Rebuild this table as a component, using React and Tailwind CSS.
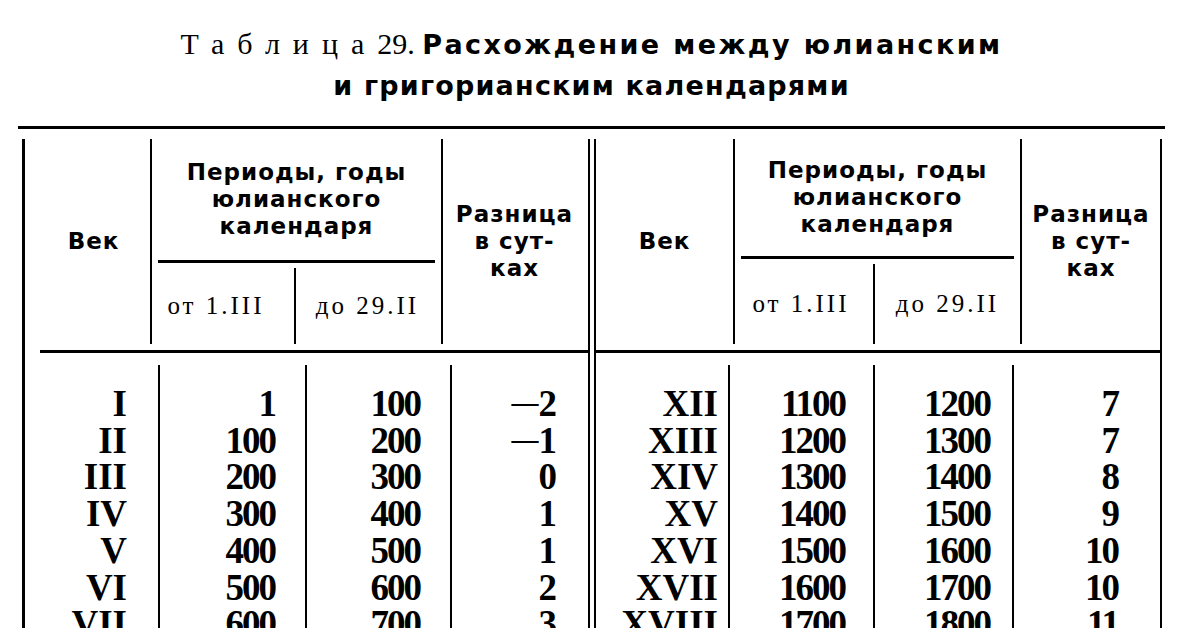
import React from 'react';

const serif = { fontFamily: '"Liberation Serif", "DejaVu Serif", serif' };
const sans = { fontFamily: '"DejaVu Sans", "Liberation Sans", sans-serif' };

const leftRows = [
  ['I', '1', '100', '—2'],
  ['II', '100', '200', '—1'],
  ['III', '200', '300', '0'],
  ['IV', '300', '400', '1'],
  ['V', '400', '500', '1'],
  ['VI', '500', '600', '2'],
  ['VII', '600', '700', '3'],
];

const rightRows = [
  ['XII', '1100', '1200', '7'],
  ['XIII', '1200', '1300', '7'],
  ['XIV', '1300', '1400', '8'],
  ['XV', '1400', '1500', '9'],
  ['XVI', '1500', '1600', '10'],
  ['XVII', '1600', '1700', '10'],
  ['XVIII', '1700', '1800', '11'],
];

const Diff = ({ value }) => {
  if (value.startsWith('—')) {
    return (
      <span>
        <span className="relative -top-[5px] text-[27px] leading-none tracking-normal">—</span>
        {value.slice(1)}
      </span>
    );
  }
  return <span>{value}</span>;
};

// one half of the table: header, rule and body
const Half = ({ rows, head, body, topH, ruleMl, right }) => (
  <div className={`flex flex-col ${right ? 'border-r-2 border-black' : ''}`}>
    {/* header */}
    <div className="flex h-[205px] shrink-0">
      <div
        className={`flex items-center justify-center border-r-2 border-black font-bold text-[23px] tracking-[1px] ${head.vekPad}`}
        style={{ ...sans, width: head.w[0] }}
      >
        Век
      </div>
      <div className="flex flex-col border-r-2 border-black" style={{ width: head.w[1] }}>
        <div
          className="flex flex-col items-center justify-center font-bold text-[23px] leading-[27px] tracking-[1px]"
          style={{ ...sans, height: topH }}
        >
          <div>Периоды, годы</div>
          <div>юлианского</div>
          <div>календаря</div>
        </div>
        <div className="h-[3px] bg-black mx-[6px]" />
        <div className="flex flex-1 pt-[5px]">
          <div
            className={`flex items-center justify-center border-r-2 border-black text-[25px] tracking-[3px] ${head.subPad}`}
            style={{ ...serif, width: head.sub[0] }}
          >
            от 1.III
          </div>
          <div
            className="flex items-center justify-center text-[25px] tracking-[3px]"
            style={{ ...serif, width: head.sub[1] }}
          >
            до 29.II
          </div>
        </div>
      </div>
      <div
        className="flex flex-col items-center justify-center font-bold text-[23px] leading-[27px] tracking-[1px]"
        style={{ ...sans, width: head.w[2] }}
      >
        <div>Разница</div>
        <div>в сут-</div>
        <div>ках</div>
      </div>
    </div>

    {/* header rule */}
    <div className="h-[3px] shrink-0 bg-black mt-[6px]" style={{ marginLeft: ruleMl }} />

    {/* body */}
    <div className="flex flex-1 mt-[12px]">
      {body.map((col, ci) => (
        <div
          key={ci}
          className={`flex flex-col items-end pt-[21px] font-bold text-[37px] leading-[36.7px] ${
            ci === 0 ? 'tracking-normal' : 'tracking-[-2px]'
          } ${ci < 3 ? 'border-r-2 border-black' : ''}`}
          style={{ ...serif, width: col.w, paddingRight: col.pr }}
        >
          {rows.map((r, ri) => (
            <div key={ri} className="whitespace-nowrap">
              {ci === 3 ? <Diff value={r[3]} /> : r[ci]}
            </div>
          ))}
        </div>
      ))}
    </div>
  </div>
);

export default function App() {
  return (
    <div className="w-[1200px] h-[628px] bg-white text-black overflow-hidden flex flex-col">
      {/* title */}
      <div className="h-[126px] shrink-0 pt-[25px] ml-[18px] w-[1147px] text-center">
        <div className="leading-[37px] whitespace-nowrap">
          <span className="text-[30px] tracking-[13px]" style={serif}>
            Таблица
          </span>
          <span className="text-[30px]" style={serif}>
            29.{' '}
          </span>
          <span className="text-[27px] font-bold tracking-[2.4px]" style={sans}>
            Расхождение между юлианским
          </span>
        </div>
        <div className="leading-[37px] text-[27px] font-bold tracking-[1.2px]" style={sans}>
          и григорианским календарями
        </div>
      </div>

      {/* top rule */}
      <div className="h-[3px] shrink-0 bg-black ml-[18px] w-[1147px]" />

      {/* table */}
      <div className="flex flex-1 min-h-0 mt-[10px] ml-[22px] border-l-[3px] border-black">
        <Half
          rows={leftRows}
          topH={121}
          ruleMl={15}
          head={{ w: [127, 291, 143], sub: [144, 143], vekPad: 'pl-[12px]', subPad: 'pr-[14px]' }}
          body={[
            { w: 135, pr: 31 },
            { w: 147, pr: 30 },
            { w: 145, pr: 30 },
            { w: 136, pr: 33 },
          ]}
        />
        <div className="w-[8px] border-l-2 border-r-2 border-black" />
        <Half
          rows={rightRows}
          topH={117}
          ruleMl={0}
          right
          head={{ w: [139, 287, 138], sub: [140, 145], vekPad: '', subPad: 'pr-[6px]' }}
          body={[
            { w: 134, pr: 10 },
            { w: 145, pr: 28 },
            { w: 139, pr: 22 },
            { w: 146, pr: 42 },
          ]}
        />
      </div>
    </div>
  );
}
